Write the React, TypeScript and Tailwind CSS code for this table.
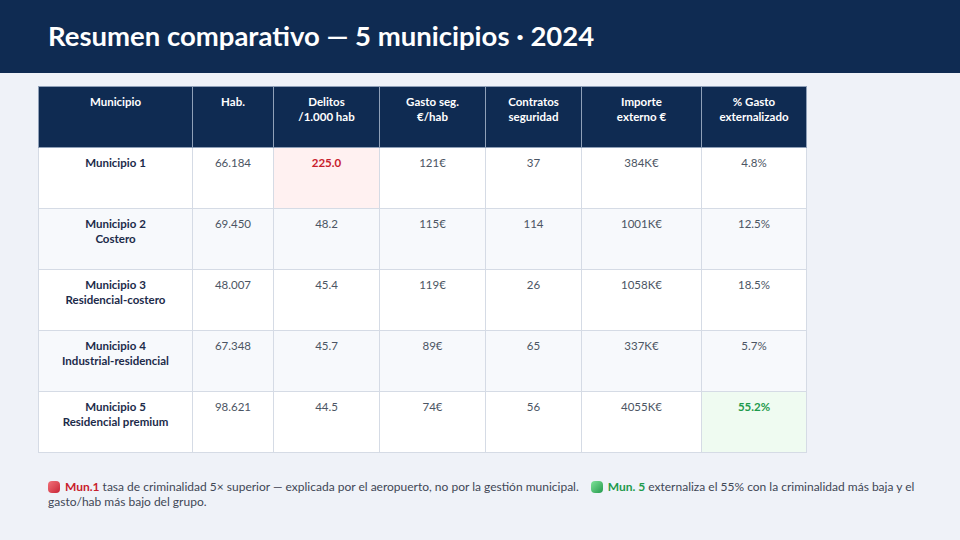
type Row = {
  name: string;
  sub?: string;
  hab: string;
  delitos: string;
  gasto: string;
  contratos: string;
  importe: string;
  pct: string;
};

const rows: Row[] = [
  { name: "Municipio 1", hab: "66.184", delitos: "225.0", gasto: "121€", contratos: "37", importe: "384K€", pct: "4.8%" },
  { name: "Municipio 2", sub: "Costero", hab: "69.450", delitos: "48.2", gasto: "115€", contratos: "114", importe: "1001K€", pct: "12.5%" },
  { name: "Municipio 3", sub: "Residencial-costero", hab: "48.007", delitos: "45.4", gasto: "119€", contratos: "26", importe: "1058K€", pct: "18.5%" },
  { name: "Municipio 4", sub: "Industrial-residencial", hab: "67.348", delitos: "45.7", gasto: "89€", contratos: "65", importe: "337K€", pct: "5.7%" },
  { name: "Municipio 5", sub: "Residencial premium", hab: "98.621", delitos: "44.5", gasto: "74€", contratos: "56", importe: "4055K€", pct: "55.2%" },
];

const headers = [
  ["Municipio"],
  ["Hab."],
  ["Delitos", "/1.000 hab"],
  ["Gasto seg.", "€/hab"],
  ["Contratos", "seguridad"],
  ["Importe", "externo €"],
  ["% Gasto", "externalizado"],
];

const widths = ["w-[154px]", "w-[81px]", "w-[106px]", "w-[106px]", "w-[96px]", "w-[120px]", "w-[105px]"];

export default function App() {
  return (
    <div className="w-[960px] h-[540px] bg-[#eff2f8] overflow-hidden" style={{ fontFamily: "Lato, 'Noto Sans', sans-serif" }}>
      {/* Title bar */}
      <div className="h-[73px] bg-[#0f2b52] flex items-center px-[48px]">
        <h1 className="text-white font-bold text-[27.5px] leading-none -mt-[2px]">Resumen comparativo — 5 municipios · 2024</h1>
      </div>

      {/* Table */}
      <div className="pt-[13px] pl-[38px]">
        <table className="table-fixed border-collapse w-[768px] text-[11.5px]">
          <colgroup>
            {widths.map((w, i) => (
              <col key={i} className={w} />
            ))}
          </colgroup>
          <thead>
            <tr className="h-[61px] bg-[#0f2b52]">
              {headers.map((h, i) => (
                <th key={i} className="align-top text-center font-bold text-white leading-[15px] pt-[7px] border border-[#8fa0b8]">
                  {h.map((l, j) => (
                    <div key={j}>{l}</div>
                  ))}
                </th>
              ))}
            </tr>
          </thead>
          <tbody>
            {rows.map((r, i) => {
              const bg = i % 2 === 0 ? "bg-white" : "bg-[#f7f9fc]";
              const td = "align-top text-center text-[#4b5563] leading-[15px] pt-[7px] border border-[#d5dbe5]";
              return (
                <tr key={i} className={`h-[61px] ${bg}`}>
                  <td className="align-top text-center font-bold text-[#1c2b4a] leading-[15px] pt-[7px] border border-[#d5dbe5]">
                    <div>{r.name}</div>
                    {r.sub && <div>{r.sub}</div>}
                  </td>
                  <td className={td}>{r.hab}</td>
                  <td className={i === 0 ? `${td} bg-[#fff1f1] !text-[#c8202c] font-bold` : td}>{r.delitos}</td>
                  <td className={td}>{r.gasto}</td>
                  <td className={td}>{r.contratos}</td>
                  <td className={td}>{r.importe}</td>
                  <td className={i === 4 ? `${td} bg-[#effbf1] !text-[#1e9a4c] font-bold` : td}>{r.pct}</td>
                </tr>
              );
            })}
          </tbody>
        </table>
      </div>

      {/* Footnote */}
      <div className="mt-[26px] ml-[48px] text-[12px] leading-[15px] text-[#3f4756]">
        <div className="flex items-center whitespace-nowrap">
          <span className="w-[12px] h-[12px] rounded-[4px] bg-gradient-to-br from-[#f2707a] to-[#c81e36] mr-[5px] shrink-0" />
          <span className="font-bold text-[#c8202c]">Mun.1</span>
          <span className="ml-[3px]">tasa de criminalidad 5× superior — explicada por el aeropuerto, no por la gestión municipal.</span>
          <span className="w-[12px] h-[12px] rounded-[4px] bg-gradient-to-br from-[#7ee49a] to-[#1f9a4e] ml-[12px] mr-[5px] shrink-0" />
          <span className="font-bold text-[#1e9a4c]">Mun. 5</span>
          <span className="ml-[3px]">externaliza el 55% con la criminalidad más baja y el</span>
        </div>
        <div>gasto/hab más bajo del grupo.</div>
      </div>
    </div>
  );
}
